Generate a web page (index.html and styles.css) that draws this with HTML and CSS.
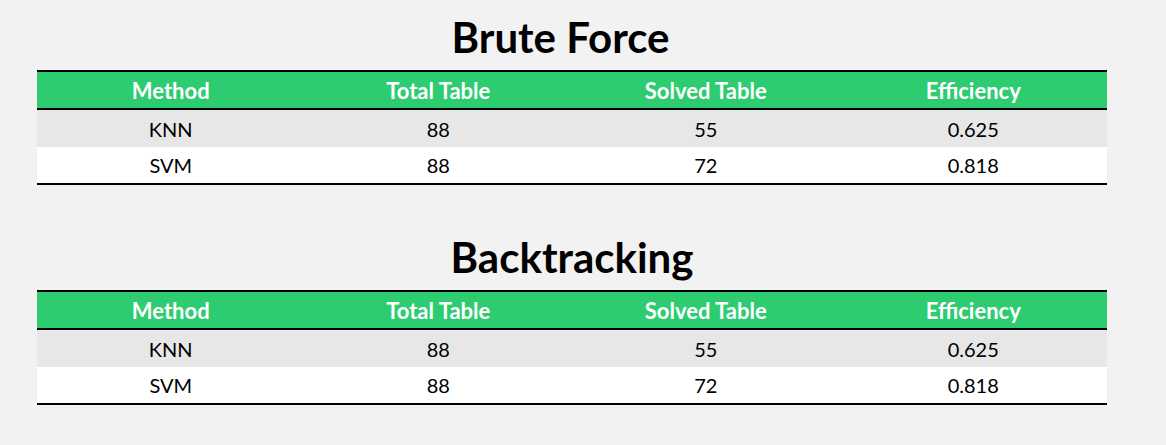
FILE: index.html
```html
<!DOCTYPE html>
<html>
<head>
<meta charset="utf-8">
<link rel="stylesheet" href="styles.css">
</head>
<body>
<main class="page">
  <section class="block">
    <h1 class="title title-shifted">Brute Force</h1>
    <table class="results">
      <thead>
        <tr><th>Method</th><th>Total Table</th><th>Solved Table</th><th>Efficiency</th></tr>
      </thead>
      <tbody>
        <tr class="odd"><td>KNN</td><td>88</td><td>55</td><td>0.625</td></tr>
        <tr class="even"><td>SVM</td><td>88</td><td>72</td><td>0.818</td></tr>
      </tbody>
    </table>
  </section>
  <section class="block">
    <h1 class="title">Backtracking</h1>
    <table class="results">
      <thead>
        <tr><th>Method</th><th>Total Table</th><th>Solved Table</th><th>Efficiency</th></tr>
      </thead>
      <tbody>
        <tr class="odd"><td>KNN</td><td>88</td><td>55</td><td>0.625</td></tr>
        <tr class="even"><td>SVM</td><td>88</td><td>72</td><td>0.818</td></tr>
      </tbody>
    </table>
  </section>
</main>
</body>
</html>
```
FILE: styles.css
```css
html, body {
  margin: 0;
  padding: 0;
  background: #f2f2f2;
}
body {
  font-family: Lato, "Open Sans", sans-serif;
  color: #000;
}
.page {
  width: 1070px;
  padding-left: 37px;
  display: flex;
  flex-direction: column;
}
.block {
  display: flex;
  flex-direction: column;
  height: 220px;
}
.title {
  margin: 12px 0 8px 0;
  height: 50px;
  line-height: 50px;
  font-size: 42px;
  font-weight: 700;
  text-align: center;
}
.title-shifted {
  margin-right: 23px;
}
.results {
  width: 1070px;
  border-collapse: collapse;
  table-layout: fixed;
  border-top: 2px solid #000;
  border-bottom: 2px solid #000;
}
.results th {
  background: #2ecc71;
  color: #fff;
  font-size: 22px;
  font-weight: 700;
  height: 36px;
  padding: 0;
  border-bottom: 2px solid #000;
  text-align: center;
}
.results td {
  height: 36px;
  padding: 0;
  font-size: 20px;
  text-align: center;
}
.results tr.odd td { background: #e7e7e7; height: 37px; }
.results tr.even td { background: #fff; }
```
